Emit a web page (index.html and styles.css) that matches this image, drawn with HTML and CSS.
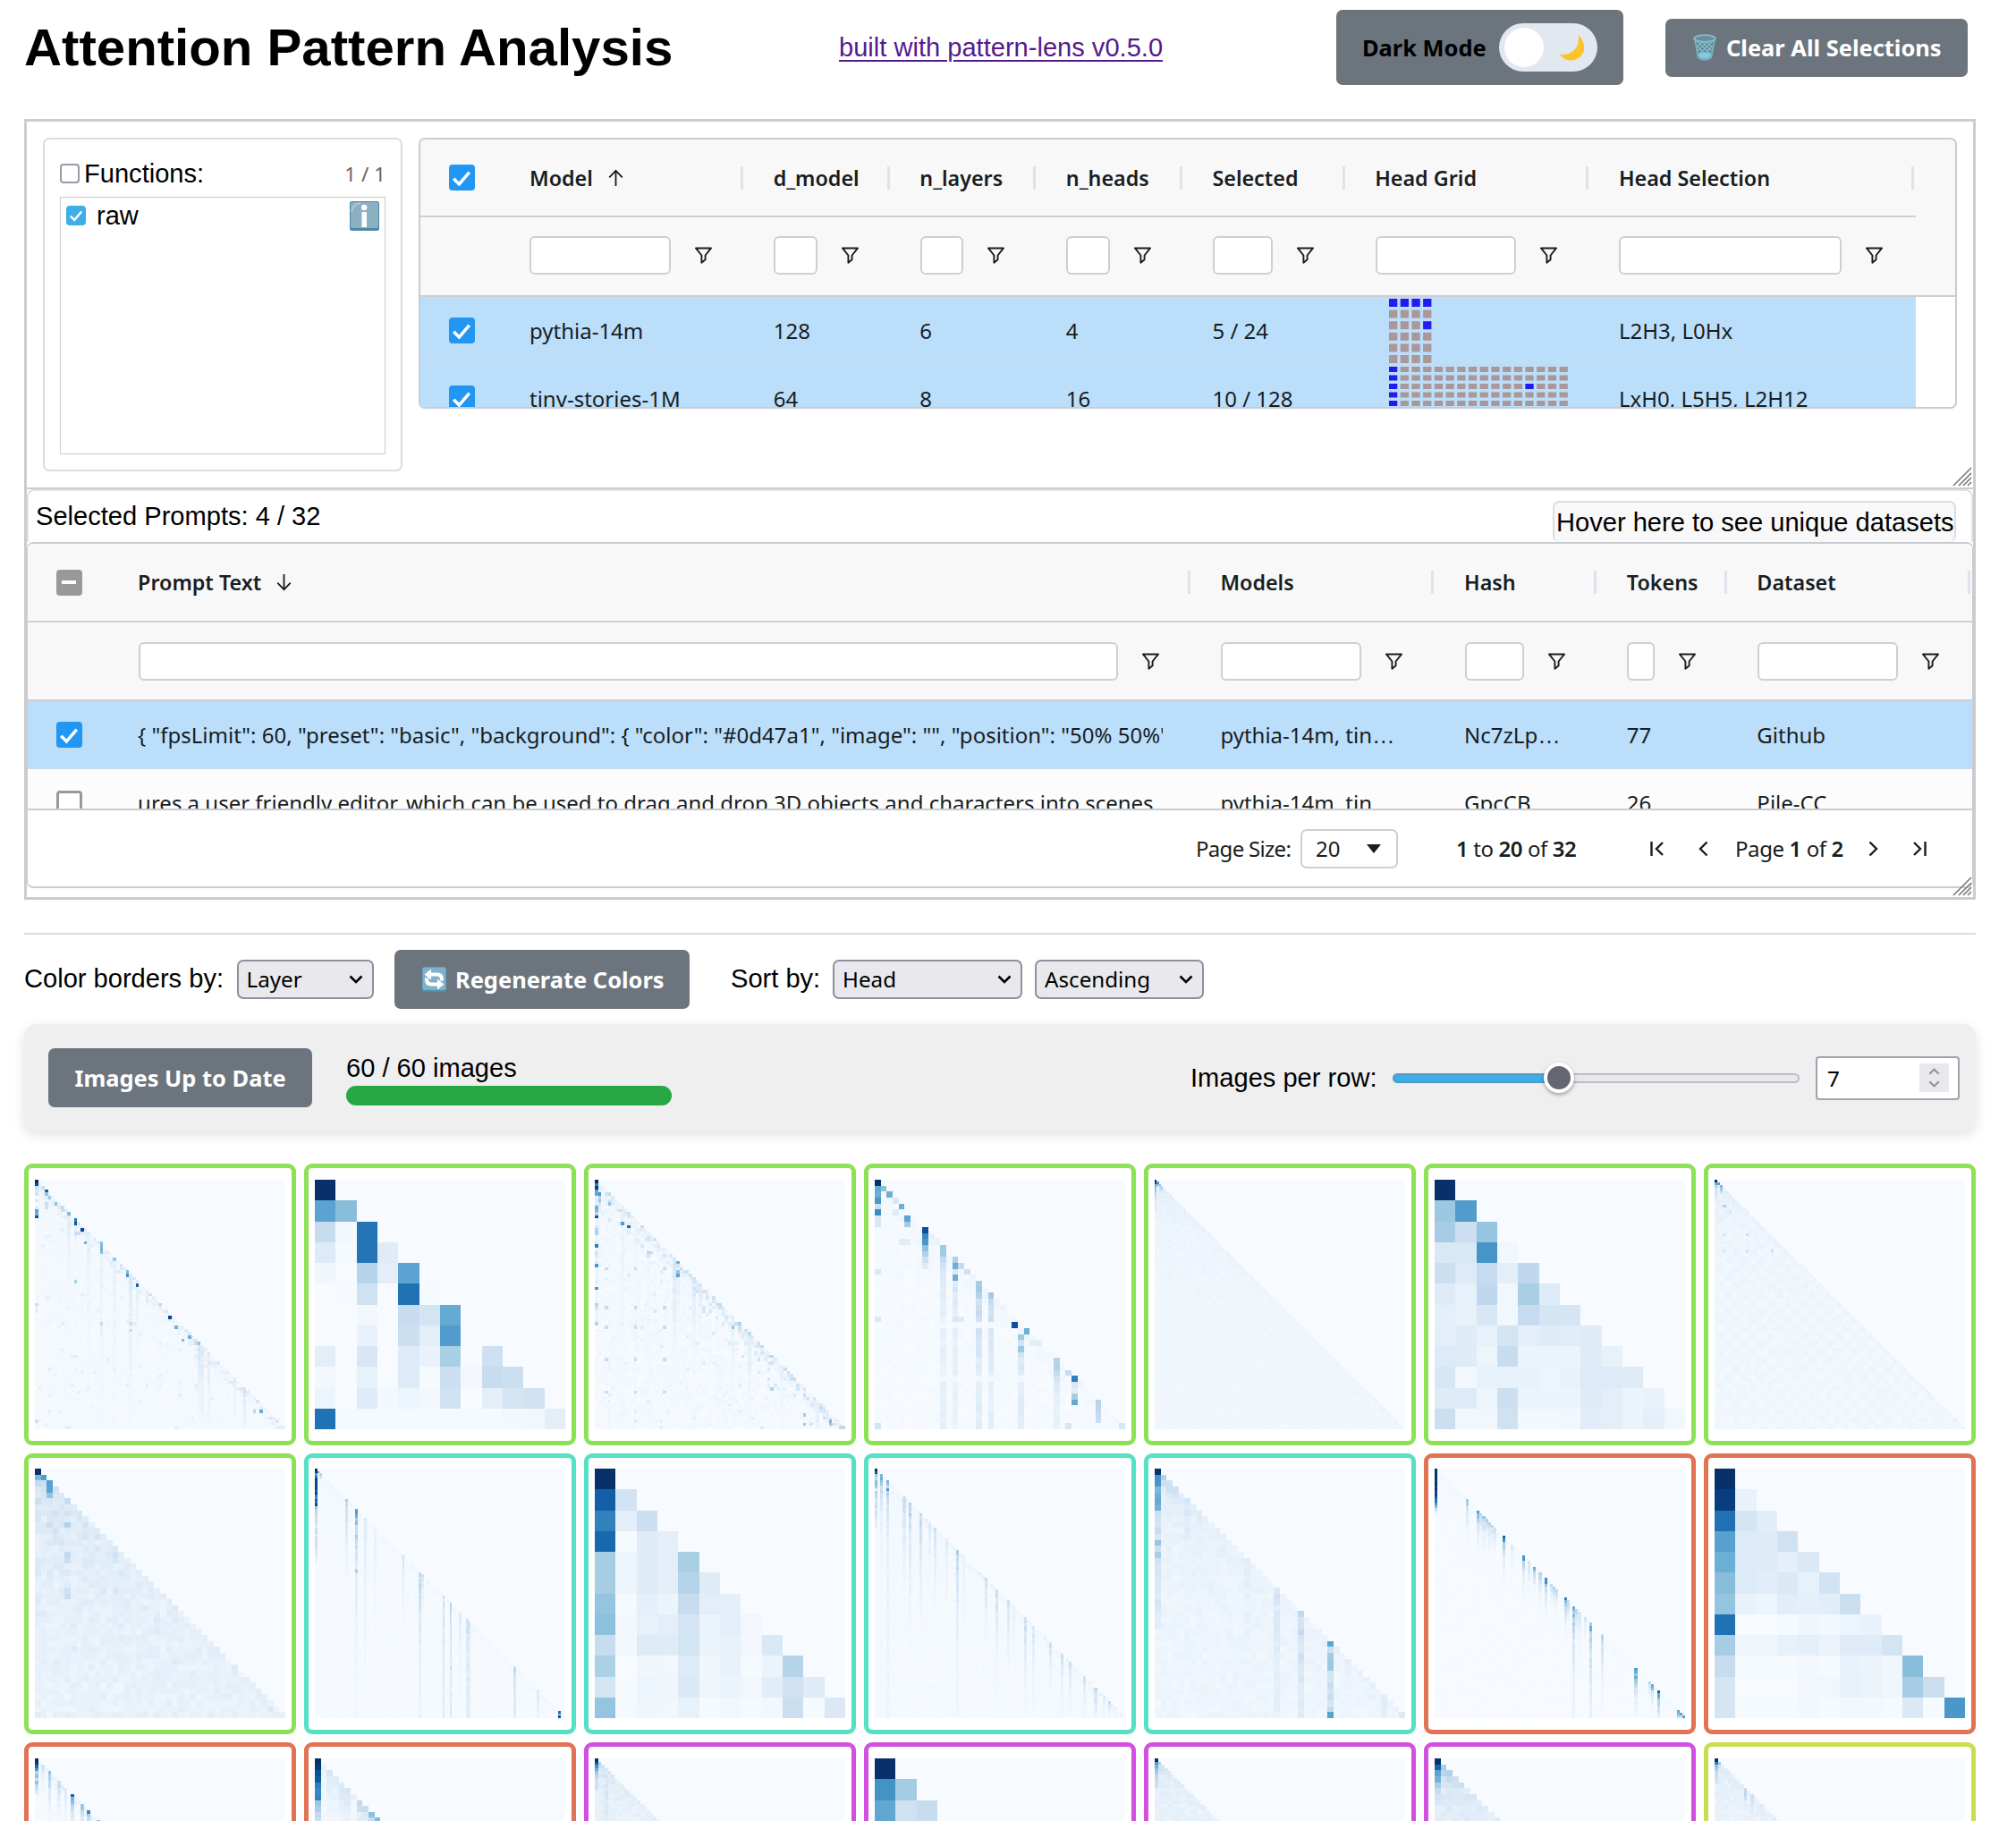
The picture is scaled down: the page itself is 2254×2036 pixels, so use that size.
FILE: index.html
```html
<!DOCTYPE html>
<html lang="en">
<head>
<meta charset="utf-8">
<title>Attention Pattern Analysis</title>
<link rel="stylesheet" href="styles.css">
</head>
<body>
<svg class="defs" width="0" height="0">
  <symbol id="check" viewBox="0 0 16 16"><path d="M3 8.4 6.5 12 13 4.4" fill="none" stroke="#fff" stroke-width="2"/></symbol>
  <symbol id="filter" viewBox="0 0 22 20"><path d="M2 1.5H20L13.2 10V15L8.8 18.6V10Z" fill="none" stroke="#181d1f" stroke-width="2" stroke-linejoin="round"/></symbol>
  <symbol id="arrow" viewBox="0 0 20 22"><path d="M10 21V2M2 10.2 10 2l8 8.2" fill="none" stroke="#181d1f" stroke-width="2"/></symbol>
  <symbol id="chev" viewBox="0 0 16 10"><path d="M1.5 1.5 8 8l6.5-6.5" fill="none" stroke="currentColor" stroke-width="2.6"/></symbol>
  <symbol id="grip" viewBox="0 0 22 22"><path d="M1 21 21 1M7 21 21 7M12 21l9-9M17 21l4-4" stroke="#777" stroke-width="1.6"/></symbol>
</svg>

<header class="top">
  <h1>Attention Pattern Analysis</h1>
  <a href="#">built with pattern-lens v0.5.0</a>
  <div class="btn dark-mode"><span>Dark Mode</span>
    <span class="toggle"><i></i><svg width="29" height="29" viewBox="0 0 29 29"><path d="M21.500 .5C30 7 31 20 22 26 15 30.500 5 29 .5 21 10 25 25 16 21.500 .5Z" fill="#fdc32a"/></svg></span>
  </div>
  <div class="btn clear"><svg width="26" height="30" viewBox="0 0 26 30"><path d="M1.500 5 5.500 26c3 3.500 12 3.500 15 0L24.500 5Z" fill="#5e8793"/><path d="M4 8l16 15M9 8l12 11M15 8l7 7M5 14l13 13M6 21l6 6M22 8 6 23M17 8 5 19M11 8l-7 7M21 14 8 27M20 21l-6 6" stroke="#88bccb" stroke-width="1.1"/><ellipse cx="13" cy="24" rx="7" ry="3.500" fill="#7fcbe0"/><path d="M2 6 5.500 26c3 3.500 12 3.500 15 0L24 6" stroke="#7db7c8" stroke-width="1.500" fill="none"/><ellipse cx="13" cy="5" rx="11.800" ry="3.800" fill="#65909c" stroke="#86bccb" stroke-width="1.800"/></svg><span>Clear All Selections</span></div>
</header>

<main class="panel">
  <section class="upper">
    <div class="functions">
      <div class="fn-head"><span class="box"></span><span>Functions:</span><small>1 / 1</small></div>
      <div class="fn-list"><div class="fn-row"><span class="box on"><svg><use href="#check"/></svg></span><span>raw</span>
        <svg class="info" width="33" height="33" viewBox="0 0 33 33"><rect width="33" height="33" rx="2.500" fill="#4f8aa3"/><rect x="1" y="1" width="31" height="29" rx="2" fill="#8ab0c2"/><path d="M2 12C3 6 6 3 12 2" stroke="#b5d0dc" stroke-width="1.500" fill="none"/><rect x="13.500" y="12" width="5.500" height="17" fill="#fff"/><circle cx="16.200" cy="7" r="3.200" fill="#fff"/></svg></div></div>
    </div>
    <div class="grid models">
      <div class="row head"><div class="c"><span class="cb on"><svg><use href="#check"/></svg></span></div><div class="c">Model<svg class="sort"><use href="#arrow"/></svg></div><div class="c">d_model</div><div class="c">n_layers</div><div class="c">n_heads</div><div class="c">Selected</div><div class="c">Head Grid</div><div class="c">Head Selection</div></div>
      <div class="row filters"><div></div><div class="f"><b></b><svg><use href="#filter"/></svg></div><div class="f"><b></b><svg><use href="#filter"/></svg></div><div class="f"><b></b><svg><use href="#filter"/></svg></div><div class="f"><b></b><svg><use href="#filter"/></svg></div><div class="f"><b></b><svg><use href="#filter"/></svg></div><div class="f"><b></b><svg><use href="#filter"/></svg></div><div class="f"><b></b><svg><use href="#filter"/></svg></div></div>
      <div class="body">
        <div class="row sel"><div class="c"><span class="cb on"><svg><use href="#check"/></svg></span></div><div class="c">pythia-14m</div><div class="c">128</div><div class="c">6</div><div class="c">4</div><div class="c">5 / 24</div><div class="c"><svg class="heads" data-heads="4" data-layers="6" data-on="L0H0 L0H1 L0H2 L0H3 L2H3"></svg></div><div class="c">L2H3, L0Hx</div></div>
        <div class="row sel"><div class="c"><span class="cb on"><svg><use href="#check"/></svg></span></div><div class="c">tiny-stories-1M</div><div class="c">64</div><div class="c">8</div><div class="c">16</div><div class="c">10 / 128</div><div class="c"><svg class="heads" data-heads="16" data-layers="8" data-on="L0H0 L1H0 L2H0 L3H0 L4H0 L5H0 L6H0 L7H0 L5H5 L2H12"></svg></div><div class="c">LxH0, L5H5, L2H12</div></div>
      </div>
    </div>
    <svg class="grip"><use href="#grip"/></svg>
  </section>

  <section class="lower">
    <div class="prompt-head"><span>Selected Prompts: 4 / 32</span><span class="hover">Hover here to see unique datasets</span></div>
    <div class="grid prompts">
      <div class="row head"><div class="c"><span class="cb part"></span></div><div class="c">Prompt Text<svg class="sort down"><use href="#arrow"/></svg></div><div class="c">Models</div><div class="c">Hash</div><div class="c">Tokens</div><div class="c">Dataset</div></div>
      <div class="row filters"><div></div><div class="f"><b></b><svg><use href="#filter"/></svg></div><div class="f"><b></b><svg><use href="#filter"/></svg></div><div class="f"><b></b><svg><use href="#filter"/></svg></div><div class="f"><b></b><svg><use href="#filter"/></svg></div><div class="f"><b></b><svg><use href="#filter"/></svg></div></div>
      <div class="body">
        <div class="row sel"><div class="c"><span class="cb on"><svg><use href="#check"/></svg></span></div><div class="c"><p class="clip">{ "fpsLimit": 60, "preset": "basic", "background": { "color": "#0d47a1", "image": "", "position": "50% 50%"</p></div><div class="c">pythia-14m, tin<span class="dots">…</span></div><div class="c">Nc7zLp<span class="dots">…</span></div><div class="c">77</div><div class="c">Github</div></div>
        <div class="row odd"><div class="c"><span class="cb"></span></div><div class="c"><p class="clip">ures a user friendly editor, which can be used to drag and drop 3D objects and characters into scenes,</p></div><div class="c">pythia-14m, tin<span class="dots">…</span></div><div class="c">GpcCB<span class="dots">…</span></div><div class="c">26</div><div class="c">Pile-CC</div></div>
      </div>
      <footer class="pager">
        <span class="size-label">Page Size:</span>
        <span class="size">20<svg width="16" height="10"><path d="M0 0H16L8 10Z" fill="#181d1f"/></svg></span>
        <span class="range"><b>1</b> to <b>20</b> of <b>32</b></span>
        <svg class="p-first" width="16" height="18" viewBox="0 0 16 18"><path d="M1.500 1V17M14 2 7 9l7 7" /></svg>
        <svg class="p-prev" width="11" height="18" viewBox="0 0 11 18"><path d="M9.500 1.500 2 9l7.500 7.500"/></svg>
        <span class="page">Page <b>1</b> of <b>2</b></span>
        <svg class="p-next" width="11" height="18" viewBox="0 0 11 18"><path d="M1.500 1.500 9 9l-7.500 7.500"/></svg>
        <svg class="p-last" width="16" height="18" viewBox="0 0 16 18"><path d="M14.500 1V17M2 2l7 7-7 7"/></svg>
      </footer>
    </div>
    <svg class="grip"><use href="#grip"/></svg>
  </section>
</main>

<div class="options">
  <span class="lbl l1">Color borders by:</span>
  <span class="select s1">Layer<svg><use href="#chev"/></svg></span>
  <div class="btn regen"><svg width="27" height="28" viewBox="0 0 27 28"><rect width="27" height="28" rx="2.500" fill="#4f8fae"/><rect x=".5" y=".5" width="26" height="25.500" rx="2" fill="#7fb2ca"/><path d="M8 8.500h9q5 0 5 6v1M19 19.500h-9q-5 0-5-6v-1" fill="none" stroke="#fff" stroke-width="4"/><path d="M2.500 8.500 10 2.500v12ZM24.500 19.500 17 13.500v12Z" fill="#fff"/></svg><span>Regenerate Colors</span></div>
  <span class="lbl l2">Sort by:</span>
  <span class="select s2">Head<svg><use href="#chev"/></svg></span>
  <span class="select s3">Ascending<svg><use href="#chev"/></svg></span>
</div>

<section class="controls">
  <div class="btn update"><span>Images Up to Date</span></div>
  <div class="progress"><span>60 / 60 images</span><div class="bar"></div></div>
  <span class="per-row">Images per row:</span>
  <div class="slider"><i></i></div>
  <div class="number"><span>7</span><div class="spin"><svg class="up"><use href="#chev"/></svg><svg><use href="#chev"/></svg></div></div>
</section>

<section class="cards">
  <figure class="card green"><canvas data-map="a1"></canvas></figure>
  <figure class="card green"><canvas data-map="a2"></canvas></figure>
  <figure class="card green"><canvas data-map="a3"></canvas></figure>
  <figure class="card green"><canvas data-map="a4"></canvas></figure>
  <figure class="card green"><canvas data-map="a5"></canvas></figure>
  <figure class="card green"><canvas data-map="a6"></canvas></figure>
  <figure class="card green"><canvas data-map="a7"></canvas></figure>
  <figure class="card green"><canvas data-map="b1"></canvas></figure>
  <figure class="card teal"><canvas data-map="b2"></canvas></figure>
  <figure class="card teal"><canvas data-map="b3"></canvas></figure>
  <figure class="card teal"><canvas data-map="b4"></canvas></figure>
  <figure class="card teal"><canvas data-map="b5"></canvas></figure>
  <figure class="card orange"><canvas data-map="b6"></canvas></figure>
  <figure class="card orange"><canvas data-map="b7"></canvas></figure>
  <figure class="card orange"><canvas data-map="c1"></canvas></figure>
  <figure class="card orange"><canvas data-map="c2"></canvas></figure>
  <figure class="card purple"><canvas data-map="c3"></canvas></figure>
  <figure class="card purple"><canvas data-map="c4"></canvas></figure>
  <figure class="card purple"><canvas data-map="c5"></canvas></figure>
  <figure class="card purple"><canvas data-map="c6"></canvas></figure>
  <figure class="card lime"><canvas data-map="c7"></canvas></figure>
</section>
<script src="patterns.js"></script>
</body>
</html>
```
FILE: styles.css
```css
* { box-sizing: border-box; }
html { overflow: hidden; }
body { margin: 0; padding: 11px 45px 0 27px; height: 2036px; overflow: hidden; background: #fff; color: #000; font: 29.09px/33px "Liberation Sans", Arial, sans-serif; }
.defs { position: absolute; }
svg { display: block; flex: none; }

.top { display: flex; align-items: center; height: 84px; }
h1 { margin: 0; width: 911px; font-size: 58.2px; line-height: 62px; white-space: nowrap; }
.top a { width: 556px; color: #551a8b; text-underline-offset: 4px; text-decoration-thickness: 2px; }
.btn { display: flex; align-items: center; border-radius: 7px; background: #6c757d; color: #fff; font: 700 25.45px/34px "Noto Sans", sans-serif; white-space: nowrap; }
.dark-mode { width: 321px; height: 84px; padding-left: 29px; color: #000; margin-right: 47px; }
.toggle { display: flex; align-items: center; width: 110px; height: 54px; margin-left: auto; margin-right: 29px; padding: 0 14px 0 6px; justify-content: space-between; border-radius: 27px; background: #e2e8f0; }
.toggle i { width: 44px; height: 44px; border-radius: 50%; background: #fff; }
.clear { width: 338px; height: 65px; padding-left: 31px; gap: 11px; }

.panel { height: 873px; margin-top: 38px; border: 3px solid #ccc; }
.upper { position: relative; display: flex; gap: 18px; height: 411px; padding: 18px 18px 0; border-bottom: 2px solid #ccc; }
.grip { position: absolute; right: 1px; bottom: 1px; width: 22px; height: 22px; }
.functions { width: 402px; height: 373px; padding: 21px 17px; border: 2px solid #ddd; border-radius: 7px; }
.fn-head { display: flex; align-items: center; height: 34px; gap: 5px; }
.fn-head small { margin-left: auto; color: #666; font: 22.5px "Noto Sans", sans-serif; }
.box { display: grid; place-items: center; width: 22px; height: 22px; border: 2px solid #9a9aa6; border-radius: 4px; }
.box.on { border: 0; background: #3daee9; }
.box svg { width: 20px; height: 20px; }
.fn-list { height: 288px; margin-top: 9px; border: 1.500px solid #ccc; }
.fn-row { display: flex; align-items: center; height: 40px; padding: 0 6px 0 6px; gap: 12px; }
.info { margin-left: auto; }

.grid { overflow: hidden; color: #181d1f; font: 24px/34px "Noto Sans", sans-serif; }
.models { width: 1720px; height: 303px; border: 2px solid #c8ccd2; border-radius: 7px; background: linear-gradient(#f8f8f8 176px, #fff 0); }
.models .row { display: grid; grid-template-columns: 90.300px 272.700px 163.600px 163.600px 163.600px 181.800px 272.700px 363.600px; width: 1672px; }
.prompts .row { display: grid; grid-template-columns: 91.400px 1210.300px 272.700px 181.800px 145.500px 272.700px; }
.row { height: 76px; }
.head, .filters { height: 88px; background: #f8f8f8; border-bottom: 2px solid #ccd0d5; }
.models .head { height: 87px; }
.models .filters { width: 1720px; height: 89px; padding-bottom: 2px; }
.head .c { position: relative; font-weight: 600; font-size: 23.3px; }
.head .c:not(:first-child)::after { content: ""; position: absolute; right: 2px; top: 30px; width: 3px; height: 26px; background: #dde2eb; }
.c { display: flex; align-items: center; padding-left: 31.700px; min-width: 0; white-space: nowrap; }
.sort { width: 19px; height: 20px; margin-left: 16px; }
.sort.down { transform: rotate(180deg); }
.f { display: flex; align-items: center; padding: 0 36px 0 32.200px; gap: 26px; }
.f b { flex: 1; height: 43px; border: 2px solid #ccd0d5; border-radius: 6px; background: #fff; }
.f svg { width: 21px; height: 19px; }
.cb { display: grid; place-items: center; width: 29px; height: 29px; border: 3px solid #999; border-radius: 4px; background: #fff; flex: none; }
.cb.on { border: 0; background: #2196f3; }
.cb svg { width: 28px; height: 28px; }
.cb.part { border: 0; background: #999; }
.cb.part::after { content: ""; width: 16px; height: 4px; background: #fff; }
.sel { background: #bbdefb; border-bottom: 1.500px solid #c3dcf3; }
.odd { background: #fcfcfc; }
.dots { font: 25.5px/34px "Liberation Sans", Arial, sans-serif; }
.heads { margin-left: 16px; align-self: flex-start; }

.lower { position: relative; height: 456px; }
.prompt-head { display: flex; align-items: flex-start; justify-content: space-between; height: 59px; padding: 11px 17px 0 8px; border: 2px solid #e2e2e2; border-bottom: 0; border-radius: 8px 8px 0 0; line-height: 35px; }
.hover { height: 46px; width: 451px; padding: 5px 0 0 2px; border: 2px solid #ddd; border-bottom: 0; border-radius: 7px; background: #f8f8f8; white-space: nowrap; }
.prompts { height: 387px; border: solid #c8ccd2; border-width: 2px 1px; border-radius: 7px; }
.prompts .head { height: 88px; }
.prompts .body { height: 120px; overflow: hidden; }
.clip { margin: 0; width: 1146px; overflow: hidden; }
.pager { display: flex; align-items: center; height: 87px; border-top: 2px solid #c8ccd2; padding-left: 1306px; }
.pager > svg path { fill: none; stroke: #181d1f; stroke-width: 2.4; }
.pager span { white-space: nowrap; }
.size-label { width: 117px; letter-spacing: -.7px; }
.size { display: flex; align-items: center; justify-content: space-between; width: 109px; height: 44px; padding: 0 17px 0 15px; margin-right: 65px; border: 2px solid #ccd0d5; border-radius: 7px; }
.range { width: 217px; letter-spacing: -.4px; }
.pager b { font-weight: 600; }
.p-prev { margin: 0 30px 0 38px; }
.page { width: 149px; letter-spacing: -.4px; }
.p-last { margin-left: 38px; }

.options { display: flex; align-items: center; height: 102px; margin-top: 37px; border-top: 2px solid #ddd; padding-bottom: 1px; }
.l1 { width: 237.500px; }
.select { display: flex; align-items: center; justify-content: space-between; height: 44px; padding: 0 10px 0 9px; border: 2px solid #8f8f9d; border-radius: 7px; background: #e9e9ed; font: 24.2px/32px "Noto Sans", sans-serif; }
.select svg { width: 16px; height: 10px; }
.s1 { width: 153px; }
.s2 { width: 212px; margin-right: 14px; }
.s3 { width: 189px; }
.regen { width: 330px; height: 66px; margin: 0 46px 0 23.500px; padding-left: 31px; gap: 10px; }
.l2 { width: 114px; }

.controls { display: flex; align-items: center; height: 120px; padding: 0 18px 0 27px; border-radius: 14px; background: #efefef; box-shadow: 0 4px 14px rgba(0,0,0,.12); }
.update { width: 295px; height: 66px; padding-left: 29.500px; margin-right: 38px; }
.progress { display: flex; flex-direction: column; width: 364px; gap: 3px; padding-top: 4px; }
.bar { height: 22px; border-radius: 11px; background: #28a745; }
.per-row { margin-left: auto; width: 226px; }
.slider { display: flex; align-items: center; width: 455px; height: 11px; padding-left: 169px; border: 2px solid #a2a2ac; border-radius: 6px; background: linear-gradient(90deg, #3daee9 186px, #e9e9ed 0) border-box; border-color: rgba(120,120,140,.4); }
.slider i { flex: none; width: 34px; height: 34px; margin-left: -2px; border: 4px solid #fff; border-radius: 50%; background: #666672; box-shadow: 0 2px 4px rgba(0,0,0,.35); }
.number { display: flex; align-items: center; justify-content: space-between; width: 161px; height: 49px; margin-left: 18px; padding: 0 10px 0 11px; border: 2px solid #a2a2b0; border-radius: 4px; background: #fff; font: 24.2px "Noto Sans", sans-serif; }
.spin { display: flex; flex-direction: column; align-items: center; justify-content: space-evenly; width: 33px; height: 32px; background: #e9e9ed; color: #8f8f9d; }
.spin svg { width: 13px; height: 8px; }
.spin .up { transform: rotate(180deg); }

.cards { display: grid; grid-template-columns: repeat(7, 1fr); gap: 9.100px; margin-top: 36px; }
.card { height: 314.500px; margin: 0; padding: 12.500px 6.500px; border: 5.500px solid; border-radius: 9px; }
.card canvas { display: block; width: 280px; height: 279px; image-rendering: pixelated; }
.green { border-color: #8de155; }
.teal { border-color: #54e1c4; }
.orange { border-color: #e17354; }
.purple { border-color: #d24fe1; }
.lime { border-color: #c8de4e; }
```
FILE: patterns.js
```js
// Lower-triangular attention patterns, drawn with the "Blues" colour scale.
const BLUES = [[247,251,255],[222,235,247],[198,219,239],[158,202,225],[107,174,214],[66,146,198],[33,113,181],[8,81,156],[8,48,107]];
function colour(v) {
  const t = Math.max(0, Math.min(100, v)) / 12.5, i = Math.min(7, Math.floor(t)), f = t - i;
  return 'rgb(' + BLUES[i].map((a, k) => Math.round(a + (BLUES[i + 1][k] - a) * f)) + ')';
}
function random(seed) { return () => { seed = (seed * 1664525 + 1013904223) >>> 0; return seed / 4294967296; }; }

// Full matrices for the short prompts, one row per line.
const EXACT = {
  a2: '100|55 43|24 2 74|13 1 74 12|4 0 30 10 55|0 1 20 0 75 1|0 0 3 0 24 18 52|0 0 7 0 22 10 58 0|10 0 16 0 13 7 34 0 21|2 0 8 0 13 1 22 3 24 22|5 0 13 2 5 2 20 0 10 18 20|75 1 1 1 1 1 1 1 1 2 3 10',
  a6: '100|38 58|35 22 40|15 15 61 3|22 13 25 10 27|12 8 27 3 34 13|9 8 16 3 25 17 17|10 12 8 18 9 12 11 12|13 12 5 24 6 6 6 12 8|16 3 8 8 7 5 7 13 13 12|12 13 5 22 6 6 6 12 10 6 7|22 3 3 20 2 2 3 11 10 6 9 3',
  b3: '100|82 19|69 10 22|79 1 12 10|35 5 12 10 34|35 5 12 10 30 12|40 1 9 6 24 10 9|42 2 8 10 17 6 10 3|24 2 13 12 18 6 8 3 15|33 0 4 3 13 4 7 1 6 30|18 1 5 4 14 4 6 3 11 20 12|40 1 4 3 8 1 3 1 2 22 1 14',
  b7: '100|95 7|75 17 11|56 13 12 20|50 13 12 9 14|43 13 11 14 8 19|40 7 5 11 9 11 22|75 0 0 1 4 2 5 7|35 4 4 8 9 6 12 12 18|24 1 1 1 2 1 7 6 4 43|17 0 0 0 3 3 8 6 4 35 23|17 1 1 1 2 1 3 2 1 14 1 60',
  c4: '100|62 36|53 20 24|40 15 12 10|30 10 10 12 15|30 10 10 12 15 9|30 9 9 9 9 9 9|28 9 9 9 9 9 9 9|25 8 8 8 8 8 8 8 8|25 8 8 8 8 8 8 8 8 8|20 7 7 7 7 7 7 7 7 7 7|20 7 7 7 7 7 7 7 7 7 7 7'
};

// n: tokens; first: leading column; cols: [column, strength, decay rows, start row, floor]; pts: [row, column, value]
const LONG = {
  a1: { n: 77, base: 3, noise: 2, diag: 24, fleck: 0.05, first: [100,88,20,15,20,0,15,0,10,55,50,85], cols: [[10,16,12],[12,18,6],[16,10,30],[20,12,20,20,2],[24,10,20,24,2],[29,16,20,29,2],[31,12,16],[50,22,12],[51,18,15],[53,14,18],[61,12,10],[64,20,9]],
    pts: [[3,3,80],[4,3,40],[5,4,38],[7,3,22],[8,3,22],[7,6,42],[9,8,22],[10,10,45],[12,12,72],[13,12,86],[15,14,92],[16,12,24],[16,13,22],[19,15,50],[19,20,42],[20,20,45],[21,20,48],[22,20,42],[24,24,38],[28,28,45],[29,28,62],[31,12,34],[32,31,80],[38,38,26],[42,41,92],[45,43,48],[49,45,44],[48,47,50],[50,50,40],[71,69,52],[71,67,30],[38,0,22],[74,0,20],[44,20,25],[44,29,22],[46,29,22]] },
  a3: { n: 77, base: 3, noise: 4, diag: 34, scatter: 1, fleck: 0.05, first: [100,70,95,55,52,10,10,10,48,45,30,86,5,5,15,30,32,5,5,14,70,5,18,14,5,10,60,5,5,5,5,10,5,60,5,5,5,5,30,20,5,5,5,10,30], cols: [[8,8,40],[12,5,60],[16,5,60],[24,20,18],[25,12,16],[30,18,14],[32,18,8],[42,12,16],[47,14,18],[57,12,10]],
    pts: [[4,1,60],[5,1,30],[6,1,40],[7,4,40],[13,8,58],[14,10,78],[25,25,50],[28,25,40],[29,25,55],[22,16,28],[22,17,24],[45,42,38],[64,54,30],[72,64,36],[75,64,38],[74,72,45],[75,72,38],[76,76,28],[76,75,24]].concat([27,39,45,55,65].flatMap(r => [3,12,21].map(c => [r, c, 24])).filter(p => p[1] < p[0])) },
  a4: { n: 42, base: 1.500, noise: 2, diag: 7, cols: [[11,46,3,11,9],[13,30,5,13,8],[17,38,7,17,11],[19,38,5,19,10],[24,35,4,26,10],[30,40,3,30,10]],
    pts: [[0,0,100],[1,0,52],[1,1,42],[2,0,50],[2,2,50],[3,0,60],[3,3,15],[4,0,22],[4,4,50],[5,0,65],[5,3,12],[6,5,55],[7,5,36],[6,0,16],[7,0,16],[8,8,88],[9,8,66],[10,8,60],[11,8,42],[12,8,32],[13,8,20],[14,8,12],[10,4,12],[10,5,10],[14,13,50],[14,14,25],[15,15,20],[16,13,50],[15,0,15],[23,0,14],[23,13,16],[23,14,12],[24,11,2],[24,13,2],[24,17,2],[24,19,2],[24,23,88],[25,25,50],[27,26,10],[27,27,10],[28,24,38],[32,32,24],[33,11,2],[33,13,2],[33,17,2],[33,19,2],[33,24,2],[33,33,70],[34,33,16],[35,33,10],[36,33,35],[37,33,52],[37,37,30],[38,37,28],[39,37,25],[40,37,22],[41,32,16],[41,0,18],[41,41,16]] },
  a5: { n: 120, base: 8, noise: 1.500, diag: 3, first: [100,90,50,45,40,38,30,28,20,22,18,18,15,15,14], pts: [[1,1,60],[2,1,40],[2,2,40],[3,2,30],[3,3,30],[4,3,28]], cols: [[2,30,6],[14,14,8],[18,10,8],[41,8,8],[49,8,8]] },
  a7: { n: 89, base: 7, noise: 1.500, weave: 1, diag: 3, first: [100,50,30,20,18,15,14], pts: [[1,1,55],[2,2,45],[3,2,35],[4,2,20],[9,3,32],[19,3,16],[19,11,22],[25,3,14],[25,11,18],[25,20,18],[11,5,16]] },
  b1: { n: 42, base: 13, noise: 4, diag: 4, first: [100,45,25,15,12,22,12], pts: [[1,1,58],[2,2,56],[3,2,55],[4,2,40],[5,5,24],[7,3,20],[9,5,32],[9,2,22],[10,3,18],[14,5,26],[15,5,22],[14,13,20],[15,13,16],[20,5,20],[21,5,24],[20,11,14],[20,13,16],[20,19,12],[21,19,12],[20,20,9],[21,20,9],[32,23,12],[32,24,10]] },
  b2: { n: 106, base: 2, noise: 1.500, diag: 6, first: [100,96,60,75,96,90,94,92,90,80,95,70,66,82,74,90,40,30,28,26,24,23,22,22,10,20,22,22,10,24,20,18,22,18,16,14,12,10,10,8], cols: [[13,32,15],[17,58,18,17,3],[21,16,40],[25,10,30],[37,22,14],[44,36,16,44,6],[45,22,8],[54,24,20,54,12],[57,36,8,57,14],[61,14,20],[64,25,8,64,13],[65,22,6,65,12],[84,30,7,84,11],[94,16,8,94,6],[103,70,2]], pts: [[1,1,55],[2,2,30],[3,2,20],[43,17,36],[84,57,26],[103,103,76],[105,103,88]] },
  b4: { n: 89, base: 2.500, noise: 1.500, diag: 9, first: [100,85,40,28,42,44,36,10,32,28,24,18,22,26,10,20,18,14,10,10,12], cols: [[2,50,8,2,3],[4,48,10,4,6],[10,30,15],[12,32,20],[16,30,18],[19,16,12],[21,22,14],[25,14,16],[29,36,16,29,3],[31,10,20],[39,22,12],[43,28,14],[47,24,12],[49,12,10],[53,30,14],[56,20,14],[62,24,8],[66,24,10],[69,24,8],[74,22,8],[78,30,6],[81,16,4],[83,26,3],[87,12,3]], pts: [[7,4,60],[3,2,50],[16,12,34]] },
  b5: { n: 42, base: 8, noise: 1.500, diag: 5, first: [100,62,60,45,50,52,48,22,20,18,24,16,40,22,34,20,16,18,14,16,14,12,18,16,12,10,12], cols: [[1,34,2],[2,28,3],[3,22,5],[5,20,10],[7,12,20],[15,12,20],[20,18,14,20,7],[24,30,7,24,13],[29,60,5,29,16],[32,10,5],[38,12,5,38,8],[41,14,5]], pts: [[29,29,54],[30,29,22],[31,29,36],[32,29,38],[33,29,38],[34,29,18],[35,29,18],[40,29,26],[41,29,56]] },
  b6: { n: 89, base: .8, noise: 1, diag: 6, first: [100,100,100,100,98,100,95,98,92,94,82,75,62,45,25,10,5], cols: [[11,45,5],[15,60,5],[16,40,3],[17,40,4],[18,34,3],[19,35,4],[20,30,3],[21,25,4],[24,74,5],[27,16,5],[31,76,4],[33,24,5],[35,60,3],[37,40,4],[39,78,4],[41,30,3],[42,34,3],[43,32,3],[46,66,4],[47,40,3],[49,58,9,49,5],[50,40,3],[51,24,5],[53,18,4],[55,58,11,55,6],[59,34,10],[71,90,5],[76,34,2],[77,56,3],[79,96,5],[86,70,2],[87,75,1],[88,80,1]] },
  c1: { n: 77, base: 1, noise: 2, diag: 16, first: [100,96,78,60,32,40,22,40,25,22,12], cols: [[2,24,3],[4,55,5],[7,30,5],[9,18,6],[11,80,4],[14,45,4],[16,62,4],[19,56,5],[22,50,6],[27,60,6],[33,40,8]] },
  c2: { n: 42, base: 3, noise: 1, diag: 8, first: [100,96,88,84,70,66,68,38,34,26,22], cols: [[2,16,5],[3,12,6],[4,16,6],[5,20,5],[7,28,3],[8,25,3],[9,45,3],[10,42,4],[14,40,4]] },
  c3: { n: 77, base: 10, noise: 1.500, diag: 4, first: [100,85,62,50,38,28,24,20,20,18], cols: [[1,30,3],[2,28,6],[3,22,18,3,8],[10,14,10],[13,12,10]] },
  c5: { n: 77, base: 10, noise: 1.500, diag: 4, first: [100,60,48,40,34,28,24,22,20], cols: [[1,40,4],[2,22,6],[4,14,12],[7,12,10]] },
  c6: { n: 42, base: 12, noise: 1.500, diag: 6, first: [100,80,55,48,34,24,18,14], cols: [[1,34,4],[2,36,3],[3,24,5],[4,20,6]] },
  c7: { n: 77, base: 9, noise: 1.500, diag: 5, first: [100,70,40,34,24,22,18,16], cols: [[1,34,3],[9,42,4],[11,24,6],[14,14,9]] }
};

function matrix(name) {
  if (EXACT[name]) return EXACT[name].split('|').map(r => r.split(' ').map(Number));
  const p = LONG[name], rnd = random(name.charCodeAt(0) * 31 + name.charCodeAt(1) * 977), m = [];
  for (let r = 0; r < p.n; r++) {
    m[r] = [];
    for (let c = 0; c <= r; c++) {
      let v = p.base * (0.35 + 1.200 / (1 + r / 8)) * (0.7 + rnd() * 0.6) + (rnd() - 0.5) * p.noise;
      if (p.weave) v += p.weave * Math.sin(r * 1.050) * Math.sin(c * 1.050) * 1.500;
      const d = r - c;
      if (d < 4) v += p.diag * rnd() * rnd() * (1 - d / 5);
      if (p.scatter && d < 10 && rnd() < 0.12) v += 18 * rnd();
      if (p.fleck && rnd() < p.fleck * (c % 4 === 0 ? 2 : 0.6)) v += 9 * rnd();
      m[r][c] = v;
    }
    if (p.first && p.first[r] !== undefined) m[r][0] = p.first[r];
  }
  (p.cols || []).forEach(([c, v, decay, start = c, floor = 0]) => {
    for (let r = start; r < p.n; r++) m[r][c] = Math.max(m[r][c], (floor + (v - floor) * Math.exp(-(r - start) / decay)) * (0.6 + rnd() * 0.5));
  });
  (p.pts || []).forEach(([r, c, v]) => { m[r][c] = v; });
  return m;
}

document.querySelectorAll('canvas[data-map]').forEach(cv => {
  const m = matrix(cv.dataset.map), n = m.length, g = cv.getContext('2d');
  cv.width = cv.height = n;
  g.fillStyle = colour(0);
  g.fillRect(0, 0, n, n);
  m.forEach((row, r) => row.forEach((v, c) => { g.fillStyle = colour(v); g.fillRect(c, r, 1, 1); }));
});

// Miniature head grid: one square for each layer and head.
document.querySelectorAll('svg.heads').forEach(svg => {
  const H = +svg.dataset.heads, L = +svg.dataset.layers, on = svg.dataset.on.split(' ');
  const py = L === 6 ? 12.600 : 9.500, h = L === 6 ? 9 : 6, top = 2;
  svg.setAttribute('width', H * 12.700);
  svg.setAttribute('height', 75);
  let s = '';
  for (let l = 0; l < L; l++) for (let k = 0; k < H; k++)
    s += `<rect x="${(k * 12.700).toFixed(1)}" y="${(top + l * py).toFixed(1)}" width="9.3" height="${h}" fill="${on.includes('L' + l + 'H' + k) ? '#241cee' : '#aa9797'}"/>`;
  svg.innerHTML = s;
});
```
